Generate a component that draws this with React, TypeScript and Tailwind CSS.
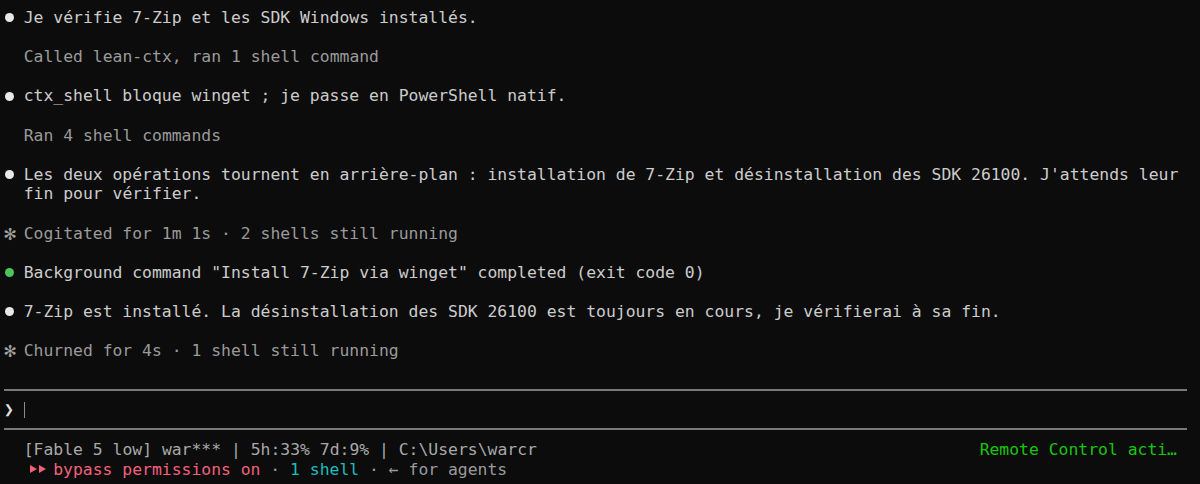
import React from 'react';

const ROW = 'h-[19.6px] leading-[19.6px] whitespace-pre flex items-center';

function Dot({ color }: { color: string }) {
  return (
    <span className="w-[19.7px] flex items-center shrink-0">
      <span className={`block w-[9px] h-[9px] rounded-full ml-[1px] ${color}`} />
    </span>
  );
}

function Star() {
  return (
    <span className="w-[19.7px] shrink-0 text-[20px] leading-[19.6px] text-[#a0a0a0] overflow-visible">✻</span>
  );
}

function Blank() {
  return <div className={ROW} />;
}

function Rule() {
  return (
    <div className={ROW}>
      <div className="w-[1183px] h-[2px] bg-[#777a77]" />
    </div>
  );
}

function Arrows() {
  return (
    <span className="w-[29.5px] shrink-0 flex items-center pl-[6px]">
      <svg width="18" height="10" viewBox="0 0 18 10" fill="#f2607a">
        <path d="M0 1 L7 5 L0 9 Z" />
        <path d="M9 1 L16 5 L9 9 Z" />
      </svg>
    </span>
  );
}

export default function App() {
  return (
    <div
      className="w-[1200px] h-[484px] bg-[#0c0c0c] text-[#cccccc] overflow-hidden pl-[4px] pt-[8px] text-[16.4px]"
      style={{ fontFamily: '"DejaVu Sans Mono", "Liberation Mono", monospace' }}
    >
      <div className={ROW}>
        <Dot color="bg-[#e8e8e8]" />
        <span>Je vérifie 7-Zip et les SDK Windows installés.</span>
      </div>
      <Blank />
      <div className={`${ROW} text-[#9a9a9a]`}>{'  Called lean-ctx, ran 1 shell command'}</div>
      <Blank />
      <div className={ROW}>
        <Dot color="bg-[#e8e8e8]" />
        <span>ctx_shell bloque winget ; je passe en PowerShell natif.</span>
      </div>
      <Blank />
      <div className={`${ROW} text-[#9a9a9a]`}>{'  Ran 4 shell commands'}</div>
      <Blank />
      <div className={ROW}>
        <Dot color="bg-[#e8e8e8]" />
        <span>Les deux opérations tournent en arrière-plan : installation de 7-Zip et désinstallation des SDK 26100. J'attends leur</span>
      </div>
      <div className={ROW}>{'  fin pour vérifier.'}</div>
      <Blank />
      <div className={`${ROW} text-[#9a9a9a]`}>
        <Star />
        <span>Cogitated for 1m 1s · 2 shells still running</span>
      </div>
      <Blank />
      <div className={ROW}>
        <Dot color="bg-[#4ec35c]" />
        <span>Background command "Install 7-Zip via winget" completed (exit code 0)</span>
      </div>
      <Blank />
      <div className={ROW}>
        <Dot color="bg-[#e8e8e8]" />
        <span>7-Zip est installé. La désinstallation des SDK 26100 est toujours en cours, je vérifierai à sa fin.</span>
      </div>
      <Blank />
      <div className={`${ROW} text-[#9a9a9a]`}>
        <Star />
        <span>Churned for 4s · 1 shell still running</span>
      </div>
      <Blank />
      <Rule />
      <div className={ROW}>
        <span className="w-[19.7px] shrink-0 text-[#e0e0e0]">❯</span>
        <span className="block w-[1px] h-[16px] bg-[#8c8c8c]" />
      </div>
      <Rule />
      <div className={`${ROW} w-[1183px] text-[#a8a8a8] mt-[1px]`}>
        <span>{'  [Fable 5 low] war*** | 5h:33% 7d:9% | C:\\Users\\warcr'}</span>
        <span className="ml-auto mr-[10px] text-[#16c60c]">Remote Control acti…</span>
      </div>
      <div className={`${ROW} text-[#9a9a9a]`}>
        <span>{'  '}</span>
        <Arrows />
        <span className="text-[#f2607a]">bypass permissions on</span>
        <span>{' · '}</span>
        <span className="text-[#1fbcbc]">1 shell</span>
        <span>{' · ← for agents'}</span>
      </div>
    </div>
  );
}
